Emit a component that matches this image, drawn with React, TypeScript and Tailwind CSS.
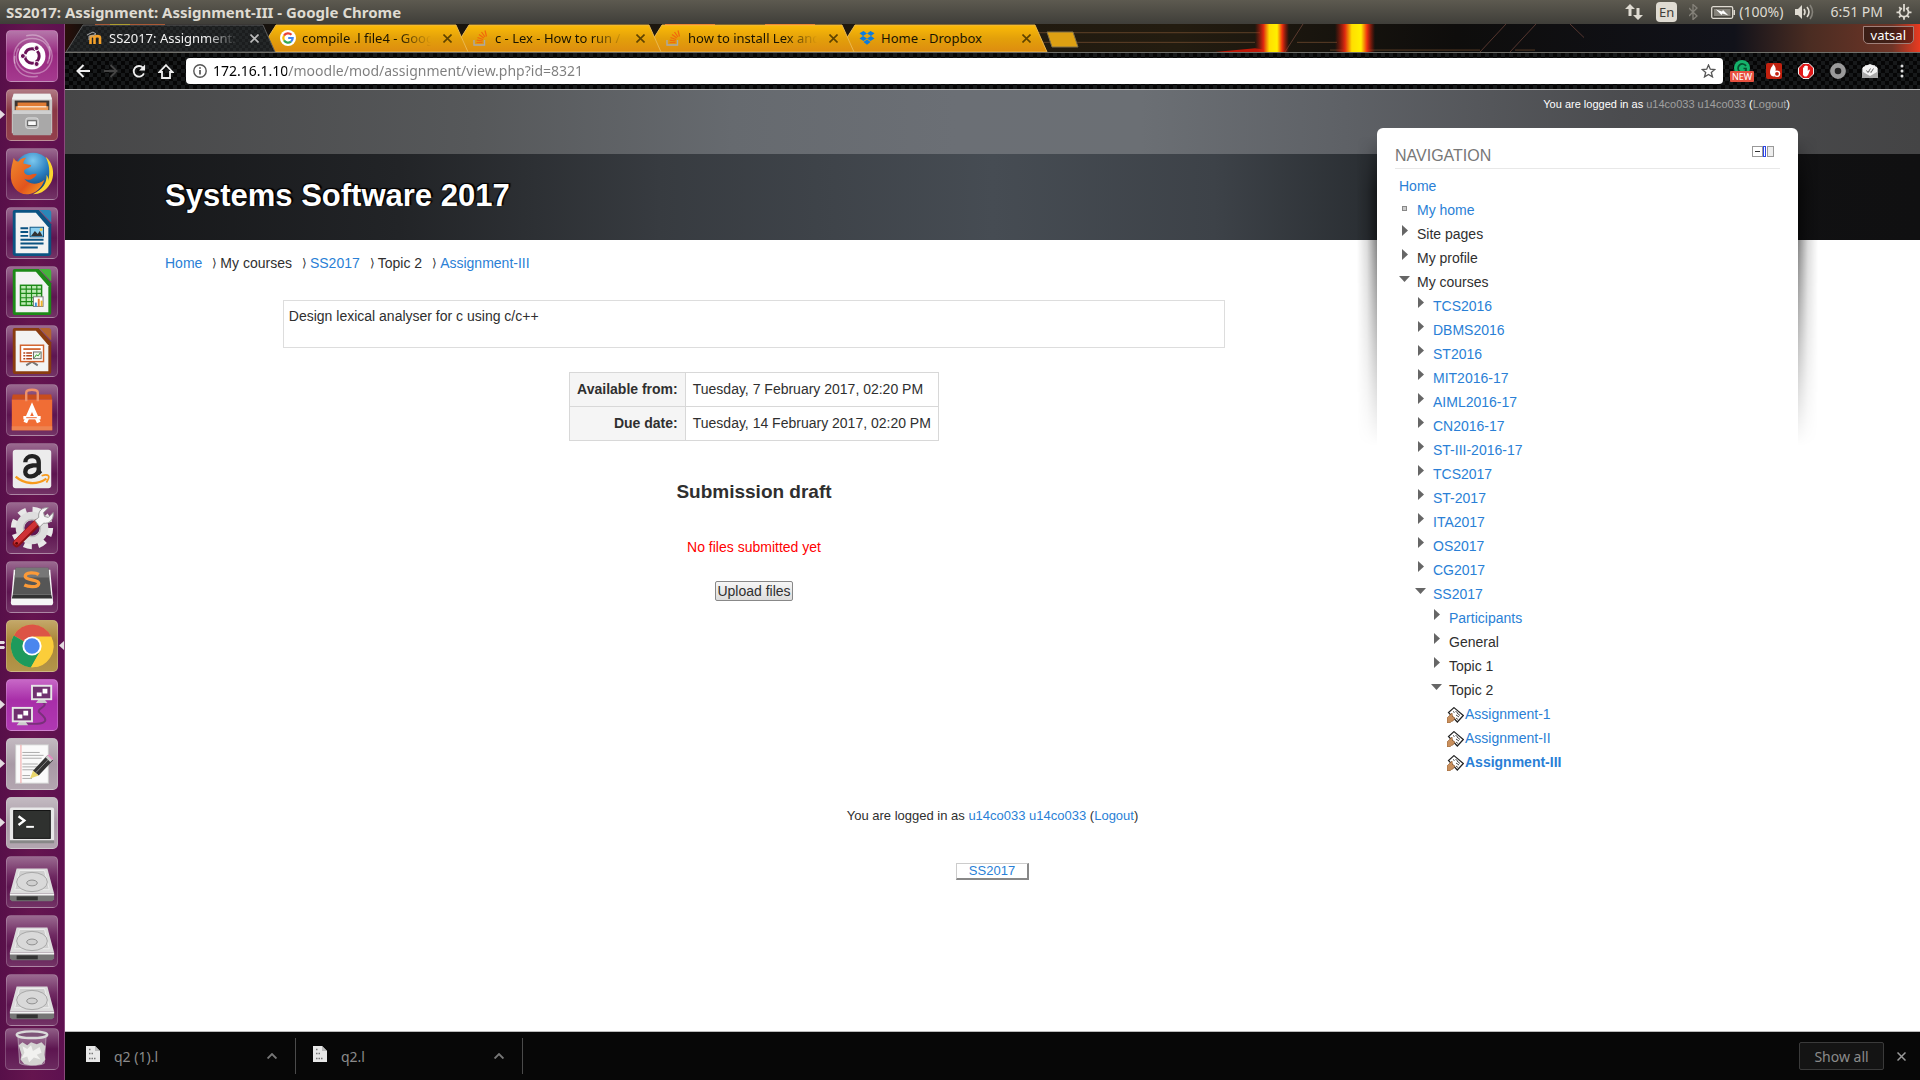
import React from "react";

type Kids = { children?: React.ReactNode };

const UI = "font-['Noto_Sans',sans-serif]";
const LINK = "text-[#2a7fd6]";

/* ---------- Launcher icons ---------- */

const Svg = ({ children }: Kids) => (
  <svg viewBox="0 0 52 52" className="block h-full w-full" aria-hidden="true">
    {children}
  </svg>
);

const DashIcon = () => (
  <Svg>
    <g fill="none" stroke="#fff" strokeOpacity=".35" strokeWidth="1.5">
      <path d="M8 34C4 16 16 6 30 8c12 2 18 14 12 26" />
      <path d="M44 16c8 14-2 30-18 28C12 42 6 30 12 18" />
      <path d="M20 5c16-4 28 8 24 24M32 47C16 50 6 40 8 26" />
    </g>
    <circle cx="26" cy="26" r="14" fill="#fff" />
    <circle cx="26" cy="26" r="7.5" fill="none" stroke="#6b1358" strokeWidth="3" strokeDasharray="13.7 2" strokeDashoffset="6" />
    <g fill="#6b1358" stroke="#fff" strokeWidth="1">
      <circle cx="16.500" cy="26" r="2.600" />
      <circle cx="30.800" cy="17.800" r="2.600" />
      <circle cx="30.800" cy="34.300" r="2.600" />
    </g>
  </Svg>
);

const FilesIcon = () => (
  <Svg>
    <path d="M7 4h38l2 7v34H5V11z" fill="#c9c7c6" />
    <path d="M7 4h38l2 6H5z" fill="#efefef" />
    <rect x="8" y="11" width="36" height="11" fill="#3c3532" />
    <rect x="11" y="13" width="30" height="9" fill="#e07b33" />
    <path d="M9 17h34v5H9z" fill="#ef9a54" />
    <path d="M11 17.500h30" stroke="#fff" strokeWidth="1" />
    <rect x="6" y="21" width="40" height="26" rx="1" fill="#a9a8a8" />
    <path d="M6 21h40v4H6z" fill="#cfcfcf" />
    <rect x="19.500" y="29" width="13" height="11" rx="2.500" fill="#bbb" stroke="#ddd" />
    <rect x="21.500" y="32" width="9" height="5" fill="#fafafa" stroke="#555" />
  </Svg>
);

const FirefoxIcon = () => (
  <Svg>
    <defs>
      <radialGradient id="ffb" cx=".5" cy=".2" r=".8">
        <stop offset="0" stopColor="#7cc8ee" />
        <stop offset=".5" stopColor="#2a7fc0" />
        <stop offset="1" stopColor="#123a70" />
      </radialGradient>
      <linearGradient id="ffo" x1="0" y1="0" x2="1" y2="1">
        <stop offset="0" stopColor="#f08a2c" />
        <stop offset=".6" stopColor="#e2541d" />
        <stop offset="1" stopColor="#f7a823" />
      </linearGradient>
    </defs>
    <circle cx="27" cy="24" r="20" fill="url(#ffb)" />
    <path d="M40 8c9 7 11 22 3 31-4 5-9 8-16 8 10-5 15-12 14-20 2 2 2 4 2 6 2-9 1-18-3-25z" fill="#fbd52f" />
    <path d="M7 9c1 3 3 4 5 4 2-3 5-4 8-4-2 2-3 4-3 6 3 1 7 1 8 2 1 2-5 3-7 5-1 3 2 5 5 5 3 0 5-2 8-1-3 6-9 7-13 5 4 6 14 7 21 1-3 9-9 14-17 15C12 48 3 39 4 26c0-7 2-12 3-17z" fill="url(#ffo)" />
  </Svg>
);

const OfficeDoc = ({ c, c2, children }: Kids & { c: string; c2: string }) => (
  <Svg>
    <path d="M8 2h25l13 15v30a3 3 0 0 1-3 3H9a3 3 0 0 1-3-3V4a2 2 0 0 1 2-2z" fill={c} />
    <path d="M9 5h21l13 15v27H9z" fill="#f3f3f3" />
    <path d="M34 2h9a3 3 0 0 1 3 3v10z" fill={c2} />
    {children}
  </Svg>
);

const WriterIcon = () => (
  <OfficeDoc c="#0b5382" c2="#2a87b8">
    <path d="M14 21h8M14 25h8M14 29h8M14 33h24M14 37h24M14 41h18" stroke="#0b5382" strokeWidth="2" />
    <rect x="24" y="20" width="14" height="10" fill="#8dd0f0" stroke="#0b5382" />
    <path d="M25 29l4-5 3 3 2-3 3 5z" fill="#333" />
    <circle cx="35.500" cy="22.500" r="1.500" fill="#f6c945" />
  </OfficeDoc>
);

const CalcIcon = () => (
  <OfficeDoc c="#1d8a17" c2="#43b53a">
    <rect x="14" y="19" width="22" height="21" fill="#bdeab4" stroke="#1d8a17" strokeWidth="1.500" />
    <path d="M14 23h22M14 27.500h22M14 32h22M14 36h22M20 19v21M25.500 19v21M31 19v21" stroke="#1d8a17" strokeWidth="1.200" />
    <rect x="27.500" y="31" width="10" height="10" fill="#fff" stroke="#777" />
    <path d="M29 37h2v4h-2z" fill="#3b8fd6" />
    <path d="M32 33h2v8h-2z" fill="#e07b33" />
    <path d="M35 35h2v6h-2z" fill="#f0b429" />
  </OfficeDoc>
);

const ImpressIcon = () => (
  <OfficeDoc c="#8a3c10" c2="#b3642f">
    <path d="M20 41l6-4 6 4" fill="none" stroke="#777" strokeWidth="2" />
    <rect x="14" y="20" width="24" height="17" fill="#fff" stroke="#d0602a" strokeWidth="1.500" />
    <path d="M17 24h18" stroke="#d0602a" strokeWidth="1.800" />
    <path d="M17 28h2M17 31h2M17 34h2M20 28h6M20 31h6M20 34h6" stroke="#b5451a" strokeWidth="1.500" />
    <rect x="27.500" y="27" width="8" height="7" fill="#eef5ea" stroke="#666" />
    <path d="M28.500 33l2-3 2 1 2-3" fill="none" stroke="#2b9a2b" />
  </OfficeDoc>
);

const SoftwareIcon = () => (
  <Svg>
    <path d="M6 10h40l1 5H5z" fill="#c94d1d" />
    <path d="M5 15h42v32H5z" fill="#f06d35" />
    <path d="M20 17V8c0-4 12-4 12 0v9" fill="none" stroke="#f0926a" strokeWidth="2.500" />
    <path d="M5 43h42v4H5z" fill="#ee8350" />
    <path d="M19 39l7-16 7 16" fill="none" stroke="#fff" strokeWidth="4" />
    <path d="M17 34h18" stroke="#fff" strokeWidth="3.500" />
    <path d="M20 34h11" stroke="#ef6a33" strokeWidth="1" />
  </Svg>
);

const AmazonIcon = () => (
  <Svg>
    <rect x="6" y="6" width="40" height="40" rx="3" fill="#ececec" />
    <path d="M19 19c0-8 14-9 14 0v8c0 3 1 3 2 4M33 22c-8 0-14 1-14 7 0 7 12 6 14-2" fill="none" stroke="#222" strokeWidth="4.500" />
    <path d="M9 34c9 8 22 9 32 2" fill="none" stroke="#f79a1c" strokeWidth="2.500" />
    <path d="M36 33c3-1 6-1 7 0s0 4-2 7" fill="none" stroke="#f79a1c" strokeWidth="1.800" />
  </Svg>
);

const SettingsIcon = () => (
  <Svg>
    <circle cx="26" cy="26" r="18.500" fill="none" stroke="#e8e8e8" strokeWidth="7" strokeDasharray="8 6.530" />
    <circle cx="26" cy="26" r="12.500" fill="none" stroke="#dedede" strokeWidth="9" />
    <circle cx="26" cy="26" r="9" fill="none" stroke="#bdbdbd" strokeWidth="1.200" />
    <path d="M31 21L10 42" stroke="#8d1014" strokeWidth="8" strokeLinecap="round" />
    <path d="M31 20L10 41" stroke="#cf3236" strokeWidth="5.500" strokeLinecap="round" />
    <path d="M29 18l4-3c-1-7 4-11 10-10l-5 5 1 4 4 1 5-5c1 7-4 12-10 11l-4 4z" fill="#f4f4f4" stroke="#999" />
    <circle cx="10" cy="42" r="1.500" fill="#5d080a" />
  </Svg>
);

const SublimeIcon = () => (
  <Svg>
    <path d="M7 8h38l3 34c0 2-1 3-3 3H7c-2 0-3-1-3-3z" fill="#f5f5f5" />
    <path d="M9 6h34l3 28H6z" fill="#565656" />
    <path d="M9 6h34l1 10H8z" fill="#777" />
    <path d="M6 34h40l1 4H5z" fill="#333" />
    <path d="M33 13c-3-2-14-3-14 2 0 4 14 3 14 7 0 5-11 4-15 2" fill="none" stroke="#fb9a38" strokeWidth="3.500" />
  </Svg>
);

const ChromeIcon = () => (
  <Svg>
    <circle cx="26" cy="26" r="22" fill="#fbcd3a" />
    <path d="M26 26L7 15A22 22 0 0 1 46 16z" fill="#dc5446" />
    <path d="M26 26L7 15A22 22 0 0 0 25 48l9-16z" fill="#1e9a5c" />
    <path d="M26 16h20a22 22 0 0 1-21 32l10-17z" fill="#fbcd3a" />
    <circle cx="26" cy="26" r="10" fill="#fff" />
    <circle cx="26" cy="26" r="8" fill="#4a86ee" />
  </Svg>
);

const RemoteIcon = () => (
  <Svg>
    <path d="M37 23c8 4-8 7-3 11s8 8 4 10-14 2-20 1" fill="none" stroke="#79307a" strokeWidth="2" />
    {[[25, 5], [5, 28]].map(([x, y]) => (
      <g key={x} transform={`translate(${x} ${y})`}>
        <path d="M8 15h6l3 4H5z" fill="#ccc" />
        <rect x="0" y="0" width="22" height="16" fill="#e6e6e6" />
        <rect x="2" y="2" width="18" height="12" fill="#70306f" />
        <path d="M12 4h5v5h-5zM6 8h5v4H6z" fill="#fff" />
      </g>
    ))}
  </Svg>
);

const EditorIcon = () => (
  <Svg>
    <rect x="9" y="6" width="34" height="40" fill="#fafafa" stroke="#ccc" />
    <path d="M14.500 6v40" stroke="#f0a0a0" />
    <path d="M16 14h18M16 17h22M16 20h20M16 26h16M16 29h20M16 32h12M16 38h8M16 41h10" stroke="#aaa" strokeWidth="1" />
    <path d="M27 33L42 17l6 5-15 16z" fill="#333" />
    <path d="M30 35L45 19" stroke="#888" />
    <path d="M27 33l6 5-9 3z" fill="#e9d66b" />
    <path d="M40 19l3-3 5 5-3 3z" fill="#ccc" />
    <path d="M42 17l2-1 4 4-1 2z" fill="#e58bc2" />
  </Svg>
);

const TerminalIcon = () => (
  <Svg>
    <rect x="3" y="10" width="46" height="36" rx="2" fill="#e8e8e8" />
    <path d="M3 44h46v3H3z" fill="#888" />
    <rect x="7" y="13" width="38" height="29" fill="#2f312f" stroke="#111" />
    <path d="M12 19l6 4.500-6 4.500" fill="none" stroke="#fff" strokeWidth="2.500" />
    <path d="M20 30h8" stroke="#fff" strokeWidth="2" />
  </Svg>
);

const DiskIcon = () => (
  <Svg>
    <path d="M10 12h32l7 26H3z" fill="#dcdcdc" />
    <path d="M13 14h26l5 20H8z" fill="#cfcfcf" stroke="#ededed" />
    <ellipse cx="26" cy="26" rx="16" ry="10" fill="#d9d9d9" stroke="#a5a5a5" />
    <ellipse cx="26" cy="27" rx="5.500" ry="3" fill="#d0d0d0" stroke="#8c8c8c" />
    <path d="M3 38h46v6l-2 2H5l-2-2z" fill="#767676" />
    <path d="M3 38h46v2H3z" fill="#f4f4f4" />
    <path d="M10 41h22v4H10z" fill="#333" />
  </Svg>
);

const TrashIcon = () => (
  <svg viewBox="0 0 52 42" className="block h-full w-full" aria-hidden="true">
    <path d="M11 5l2 31c4 3 22 3 26 0l2-31z" fill="#fff" fillOpacity=".22" stroke="#ddd" strokeOpacity=".5" />
    <ellipse cx="26" cy="6" rx="16" ry="3.500" fill="#7d5378" stroke="#dadada" strokeWidth="2.500" />
    <path d="M12 17l4-3 5 3 4-3 6 2 5-2 4 4-1 9 1 5-4 5-6 1-6 0-6-1-4-5 1-5z" fill="#d4d4d2" />
    <path d="M16 18l5 3 4-4 2 6 7-4 2 6-5 2 4 5-7-2-5 5-2-6-6 2 3-6z" fill="#f1f1ef" />
  </svg>
);

type Tile = { name: string; icon: React.ReactNode; bg: string; left?: number; focus?: boolean };
const GLASS = "bg-[linear-gradient(#9a6a90_0%,#6f2a62_38%,#5d1550_60%,#733366_100%)]";

const tiles: Tile[] = [
  { name: "Dash", icon: <DashIcon />, bg: "bg-[linear-gradient(#b577aa,#97287f_45%,#a53a8f)]" },
  { name: "Files", icon: <FilesIcon />, bg: "bg-[linear-gradient(#b07a84,#8a3845_40%,#93404c)]", left: 1 },
  { name: "Firefox", icon: <FirefoxIcon />, bg: GLASS },
  { name: "Writer", icon: <WriterIcon />, bg: GLASS },
  { name: "Calc", icon: <CalcIcon />, bg: GLASS },
  { name: "Impress", icon: <ImpressIcon />, bg: GLASS },
  { name: "Software", icon: <SoftwareIcon />, bg: GLASS },
  { name: "Amazon", icon: <AmazonIcon />, bg: GLASS },
  { name: "Settings", icon: <SettingsIcon />, bg: GLASS },
  { name: "Sublime Text", icon: <SublimeIcon />, bg: GLASS },
  { name: "Chrome", icon: <ChromeIcon />, bg: "bg-[linear-gradient(#c4a768,#a98638_40%,#b3954a)]", left: 2, focus: true },
  { name: "Remote Desktop", icon: <RemoteIcon />, bg: "bg-[linear-gradient(#c767c6,#a82ea8_40%,#b038b2)]", left: 1 },
  { name: "Text Editor", icon: <EditorIcon />, bg: "bg-[linear-gradient(#c3bac1,#a99aa6_50%,#b3a6b0)]", left: 1 },
  { name: "Terminal", icon: <TerminalIcon />, bg: "bg-[linear-gradient(#c3bac1,#a99aa6_50%,#b3a6b0)]", left: 1 },
  { name: "Disk 1", icon: <DiskIcon />, bg: GLASS },
  { name: "Disk 2", icon: <DiskIcon />, bg: GLASS },
  { name: "Disk 3", icon: <DiskIcon />, bg: GLASS },
];

function Launcher() {
  return (
    <nav aria-label="Launcher" className="flex w-[65px] shrink-0 flex-col border-r border-[#8a4a7c] bg-[linear-gradient(90deg,#570f49,#65154f_50%,#5e1150)] pt-1.5">
      <ul className="flex flex-col gap-[7px]">
        {tiles.map((t) => (
          <li key={t.name} className="relative pl-1.5">
            <button aria-label={t.name} className={`block size-[52px] rounded-[5px] border border-white/20 ${t.bg}`}>
              {t.icon}
            </button>
            {t.left === 1 && (
              <svg className="absolute top-[21px] left-0" width="5" height="9" aria-hidden="true"><path d="M0 0l5 4.500L0 9z" fill="#e3dbe0" /></svg>
            )}
            {t.left === 2 && (
              <svg className="absolute top-[21px] left-0" width="5" height="9" aria-hidden="true"><path d="M0 0h4l1 1.500L4 3H0zM0 5h4l1 1.500L4 8H0z" fill="#e3dbe0" /></svg>
            )}
            {t.focus && (
              <svg className="absolute top-[21px] right-0" width="5" height="9" aria-hidden="true"><path d="M5 0L0 4.500 5 9z" fill="#e3dbe0" /></svg>
            )}
          </li>
        ))}
      </ul>
      <div className="pt-0.5 pl-[5px]">
        <button aria-label="Trash" className="block h-[42px] w-[54px] rounded-[5px] border border-white/20 bg-[linear-gradient(#8f5c85,#5d1550_50%,#6b2a5f)]">
          <TrashIcon />
        </button>
      </div>
    </nav>
  );
}

/* ---------- Desktop top bar ---------- */

function TopBar() {
  return (
    <header className={`flex h-6 items-center justify-between bg-[linear-gradient(#5d5a50,#3f3e39)] pr-2 pl-1.5 text-[#dfdbd2] ${UI}`}>
      <h1 className="text-[15px] leading-6 font-bold whitespace-nowrap">SS2017: Assignment: Assignment-III - Google Chrome</h1>
      <div className="flex items-center text-[14px] leading-6 whitespace-nowrap">
        <svg width="18" height="16" viewBox="0 0 18 16" fill="#dfdbd2" aria-label="Network"><path d="M5 0l5 5H6.500v7h-3V5H0zM13 16l-5-5h3.500V4h3v7H18z" /></svg>
        <span className="ml-[13px] rounded-sm bg-[#dfdbd2] px-[3px] text-[13px] leading-5 text-[#3f3e39]">En</span>
        <svg className="ml-3" width="9" height="16" viewBox="0 0 9 16" fill="none" stroke="#85827a" strokeWidth="1.300" aria-label="Bluetooth"><path d="M0 4l8 8-4 3.500V.5L8 4l-8 8" /></svg>
        <svg className="ml-[13px]" width="25" height="13" viewBox="0 0 25 13" aria-label="Battery">
          <rect x=".7" y=".7" width="21" height="11.600" rx="1.500" fill="none" stroke="#dfdbd2" strokeWidth="1.300" />
          <rect x="3" y="3" width="16.500" height="7" fill="#85827a" />
          <path d="M22.500 4H24v5h-1.500z" fill="#dfdbd2" />
          <path d="M5 3.500l6 2 1-1.500 5.500 5.500-6-2-1 1.500z" fill="#fff" />
        </svg>
        <span className="ml-[3px]">(100%)</span>
        <svg className="ml-3" width="20" height="16" viewBox="0 0 20 16" aria-label="Volume">
          <path d="M0 5h3l4-4v14l-4-4H0z" fill="#dfdbd2" />
          <g fill="none" strokeWidth="1.600"><path d="M9 5q2 3 0 6M12 3q4 5 0 10" stroke="#dfdbd2" /><path d="M15 1q5 7 0 14" stroke="#85827a" /></g>
        </svg>
        <span className="ml-[15px]">6:51 PM</span>
        <svg className="ml-[13px]" width="16" height="16" viewBox="0 0 16 16" fill="none" stroke="#dfdbd2" aria-label="System">
          <path d="M6 4.200a4.500 4.500 0 1 0 4 0" strokeWidth="1.800" /><path d="M8 0v7.500" strokeWidth="1.800" />
          <path d="M3.200 3.200l1.600 1.600M12.800 3.200l-1.600 1.600M.5 8.300h3M15.500 8.300h-3M3 13.300l1.700-1.700M13 13.300l-1.700-1.700M8 15.800v-3" strokeWidth="1.800" />
        </svg>
      </div>
    </header>
  );
}

/* ---------- Browser chrome ---------- */

const MoodleIcon = () => (
  <svg width="16" height="16" viewBox="0 0 16 16" aria-hidden="true">
    <path d="M3.500 14V8c0-2.500 4-2.500 4 0v6M7.500 8c0-2.500 5.500-2.500 5.500 0v6" fill="none" stroke="#f4a12a" strokeWidth="2.600" />
    <path d="M0 5l6-3 3 2-4 2-3 0v4" fill="none" stroke="#aaa" strokeWidth="1" />
  </svg>
);
const GoogleIcon = () => (
  <svg width="16" height="16" viewBox="0 0 16 16" aria-hidden="true">
    <circle cx="8" cy="8" r="8" fill="#fff" />
    <g fill="none" strokeWidth="2.200">
      <path d="M11.500 4.800A4.700 4.700 0 0 0 4 5.600" stroke="#ea4335" />
      <path d="M4 5.600a4.700 4.700 0 0 0 0 4.800" stroke="#fbbc05" />
      <path d="M4 10.400a4.700 4.700 0 0 0 7 1.200" stroke="#34a853" />
      <path d="M11 11.600A4.700 4.700 0 0 0 12.700 8H8.200" stroke="#4285f4" />
    </g>
  </svg>
);
const StackIcon = () => (
  <svg width="16" height="16" viewBox="0 0 16 16" fill="none" aria-hidden="true">
    <path d="M1 10v5h10.500v-5" stroke="#a9a9a9" strokeWidth="1.400" />
    <path d="M3.500 12.500h6M3.700 10.200l6 .8M4.500 7.500l5.500 2M6 4.500l4.800 3.500M8.500 2l3.500 5M12 .5l1.500 6" stroke="#f2670c" strokeWidth="1.200" />
  </svg>
);
const DropboxIcon = () => (
  <svg width="16" height="16" viewBox="0 0 16 16" fill="#0a7ce0" aria-hidden="true">
    <path d="M4.500 1L8 3.500 4 6 .5 3.300zM11.500 1L8 3.500 12 6l3.500-2.700zM4 6l4 2.600L4.500 11 .5 8.500zM12 6L8 8.600l3.500 2.400 4-2.500zM4.500 12L8 9.600l3.500 2.400L8 14.800z" />
  </svg>
);

const tabs = [
  { title: "SS2017: Assignment:", icon: <MoodleIcon />, active: true, z: "z-50" },
  { title: "compile .l file4 - Goog", icon: <GoogleIcon />, z: "z-40" },
  { title: "c - Lex - How to run /", icon: <StackIcon />, z: "z-30" },
  { title: "how to install Lex and", icon: <StackIcon />, z: "z-20" },
  { title: "Home - Dropbox", icon: <DropboxIcon />, z: "z-10", whole: true },
];

function TabStrip() {
  return (
    <div className="relative flex h-7 items-end overflow-hidden bg-[#14110e]">
      <svg className="absolute inset-0 h-full w-full" viewBox="0 0 1855 29" preserveAspectRatio="none" aria-hidden="true">
        <defs>
          <linearGradient id="strip" x1="0" x2="1">
            <stop offset="0" stopColor="#2a0f0a" /><stop offset=".01" stopColor="#14100d" />
            <stop offset=".6" stopColor="#231c10" /><stop offset=".75" stopColor="#0e0d0c" />
            <stop offset=".9" stopColor="#11121a" /><stop offset=".94" stopColor="#4a2c22" />
            <stop offset=".985" stopColor="#6e3527" /><stop offset="1" stopColor="#ea3a20" />
          </linearGradient>
          <linearGradient id="flame" x1="0" x2="1">
            <stop offset="0" stopColor="#c01808" stopOpacity="0" /><stop offset=".25" stopColor="#e02a10" />
            <stop offset=".42" stopColor="#ffdf00" /><stop offset=".65" stopColor="#fff000" />
            <stop offset=".8" stopColor="#f03010" /><stop offset="1" stopColor="#c01808" stopOpacity="0" />
          </linearGradient>
        </defs>
        <rect width="1855" height="29" fill="url(#strip)" />
        <path d="M970 9h225M970 19h220M1232 19h40M1265 27h150M1450 27h20" stroke="#8a5a38" strokeOpacity=".6" fill="none" />
        <path d="M1150 29l40-4 24 4z" fill="#c01808" />
        <path d="M1220 29l18-29M1415 29l26-29M1445 29l26-29M1505 0l14 14" stroke="#a06050" strokeOpacity=".5" fill="none" />
        <rect x="1190" width="34" height="29" fill="url(#flame)" />
        <rect x="1270" width="40" height="29" fill="url(#flame)" />
        <rect x="30" width="70" height="1" fill="#ff5a10" /><rect x="45" width="20" height="1" fill="#ffe000" />
        <rect x="600" width="50" height="1" fill="#ff5a10" /><rect x="700" width="50" height="1" fill="#ff5a10" />
      </svg>
      <div role="tablist" aria-label="Tabs" className={`relative flex text-[13px] leading-7 ${UI}`}>
        {tabs.map((t) => (
          <div key={t.title} className={`relative -mr-[18px] h-7 w-[211px] ${t.z}`}>
            <svg className="absolute inset-0" width="211" height="28" viewBox="0 0 211 28" aria-hidden="true">
              <defs>
                <linearGradient id="gold" x2="0" y2="1"><stop offset="0" stopColor="#fbbb08" /><stop offset=".5" stopColor="#e3a00a" /><stop offset="1" stopColor="#dd8c10" /></linearGradient>
                <pattern id="carbon" width="6" height="6" patternUnits="userSpaceOnUse"><rect width="6" height="6" fill="#1b1d1e" /><path d="M0 0h3v3H0zM3 3h3v3H3z" fill="#242728" /></pattern>
              </defs>
              <path d="M1 28L18 1h180l12 27z" fill={t.active ? "url(#carbon)" : "url(#gold)"} stroke={t.active ? "#5c5c5c" : "#e9b850"} />
            </svg>
            <div className="relative flex h-7 items-center pr-[17px] pl-[22px]">
              {t.icon}
              <button
                role="tab"
                aria-selected={!!t.active}
                className={`ml-1.5 min-w-0 flex-1 overflow-hidden text-left whitespace-nowrap ${t.whole ? "" : "[mask-image:linear-gradient(90deg,#000_75%,transparent)]"} ${t.active ? "text-[#f2f2f2]" : "text-[#1a1400]"}`}
              >
                {t.title}
              </button>
              <button aria-label={`Close ${t.title}`} className={`ml-3 ${t.active ? "text-[#bbb]" : "text-[#5e4300]"}`}>
                <svg width="9" height="9" viewBox="0 0 9 9" stroke="currentColor" strokeWidth="1.600"><path d="M.5.5l8 8M8.500.5l-8 8" /></svg>
              </button>
            </div>
          </div>
        ))}
      </div>
      <button aria-label="New tab" className="relative mb-1 ml-4">
        <svg className="block" width="33" height="17" viewBox="0 0 33 17"><path d="M1 1h26l5 15H6z" fill="#dda013" stroke="#80704a" /></svg>
      </button>
      <button className={`absolute top-0.5 right-1.5 rounded-b-[5px] border border-[#a0807a] bg-black/40 px-[7px] text-[13px] leading-4 text-white ${UI}`}>vatsal</button>
    </div>
  );
}

function Toolbar() {
  return (
    <div className="flex h-[38px] items-center border-t border-b border-t-[#6f6f6a] border-b-[#b0b0b0] bg-[#060606] bg-[repeating-conic-gradient(#17191a_0_25%,#060606_0_50%)] bg-size-[8px_8px] pr-4 pl-[11px]">
      <button aria-label="Back"><svg width="14" height="14" viewBox="0 0 14 14" fill="none" stroke="#eee" strokeWidth="2"><path d="M14 7H1.500M7.500 1L1.500 7l6 6" /></svg></button>
      <button aria-label="Forward" className="ml-3.5"><svg width="14" height="14" viewBox="0 0 14 14" fill="none" stroke="#444" strokeWidth="2"><path d="M0 7h12.500M6.500 1l6 6-6 6" /></svg></button>
      <button aria-label="Reload" className="ml-3.5"><svg width="14" height="15" viewBox="0 0 15 15" fill="none" stroke="#eee" strokeWidth="2"><path d="M12.800 9.500a5.700 5.700 0 1 1-1-6" /><path d="M14 0v6.500H7.500z" fill="#eee" stroke="none" /></svg></button>
      <button aria-label="Home" className="ml-3"><svg width="16" height="15" viewBox="0 0 16 15" fill="none" stroke="#eee" strokeWidth="1.800"><path d="M8 1.200L1.500 8H4v6h8V8h2.500z" /></svg></button>
      <form className="ml-3 flex h-[26px] min-w-0 flex-1 items-center rounded-sm bg-white px-[7px]">
        <svg width="14" height="14" viewBox="0 0 14 14" fill="none" stroke="#555" strokeWidth="1.400" aria-hidden="true"><circle cx="7" cy="7" r="6.200" /><path d="M7 6v4.500M7 3.200v1.600" strokeWidth="1.700" /></svg>
        <input
          aria-label="Address"
          defaultValue="172.16.1.10/moodle/mod/assignment/view.php?id=8321"
          className={`ml-1.5 min-w-0 flex-1 bg-[linear-gradient(90deg,#000_74px,#7d7d7d_74px)] bg-clip-text text-[14px] leading-5 text-transparent outline-none ${UI}`}
        />
        <button type="button" aria-label="Bookmark"><svg width="15" height="14" viewBox="0 0 15 14" fill="none" stroke="#555" strokeWidth="1.300"><path d="M7.500 1l1.800 4.200 4.500.3-3.500 2.900 1.200 4.500-4-2.500-4 2.500 1.200-4.500L1.200 5.500l4.500-.3z" /></svg></button>
      </form>
      <div className="ml-[7px] flex items-center">
        <button aria-label="Grammar" className="relative h-[22px] w-6">
          <svg className="absolute top-0 left-1" width="16" height="16" viewBox="0 0 16 16"><circle cx="8" cy="8" r="8" fill="#15b36b" /><path d="M12 6a4.300 4.300 0 1 0 0 4.500V8.500H9.500" fill="none" stroke="#06502f" strokeWidth="1.700" /></svg>
          <span className={`absolute bottom-0 left-0 w-6 rounded-[1px] bg-[#e8503f] text-center text-[9px] leading-[11px] text-white ${UI}`}>NEW</span>
        </button>
        <button aria-label="Download manager" className="ml-3"><svg width="16" height="16" viewBox="0 0 16 16"><rect width="16" height="16" rx="2" fill="#c2210f" /><path d="M7 1c3 3 3 5 2.500 7C8 9 7.500 11 8.500 13.500 4 14 3 9 5 5c.6-1.300 2-2 2-4z" fill="#fff" /><circle cx="11" cy="10.800" r="2.600" fill="#c2210f" stroke="#fff" strokeWidth="1.400" /></svg></button>
        <button aria-label="Ad blocker" className="ml-4"><svg width="16" height="16" viewBox="0 0 16 16"><path d="M5 .5h6L15.500 5v6L11 15.500H5L.5 11V5z" fill="#e01818" stroke="#eee" /><path d="M5 8V4.500h1.200V3h1.200v-.5h1.200V3h1.200v5l1.200-1.500 1 .5-2 5-1.500 1.500H6.500L5 12z" fill="#fff" /></svg></button>
        <button aria-label="Extension" className="ml-4"><svg width="16" height="16" viewBox="0 0 16 16"><circle cx="8" cy="8" r="5.600" fill="#222" stroke="#9a9a9a" strokeWidth="4.600" /></svg></button>
        <button aria-label="Mail" className="ml-4"><svg width="16" height="14" viewBox="0 0 16 14"><path d="M0 4l3-1.500V1h10v1.500L16 4v10H0z" fill="#aaa" /><path d="M1 3l7-3 7 3v5l-7 4-7-4z" fill="#f3f3f3" /><path d="M4.500 6.500l1.500 2L8.500 4.500M8 7.500l1 1 2.500-4" fill="none" stroke="#666" /></svg></button>
        <button aria-label="Menu" className="ml-[22px]"><svg width="4" height="14" viewBox="0 0 4 14" fill="#ddd"><circle cx="2" cy="2" r="1.500" /><circle cx="2" cy="7" r="1.500" /><circle cx="2" cy="12" r="1.500" /></svg></button>
      </div>
    </div>
  );
}

/* ---------- Moodle page ---------- */

type Node = { label: string; link?: boolean; icon?: "dot" | "doc"; bold?: boolean; children?: Node[] };

const courses = ["TCS2016", "DBMS2016", "ST2016", "MIT2016-17", "AIML2016-17", "CN2016-17", "ST-III-2016-17", "TCS2017", "ST-2017", "ITA2017", "OS2017", "CG2017"];

const tree: Node[] = [
  { label: "My home", link: true, icon: "dot" },
  { label: "Site pages" },
  { label: "My profile" },
  {
    label: "My courses",
    children: [
      ...courses.map((label) => ({ label, link: true })),
      {
        label: "SS2017",
        link: true,
        children: [
          { label: "Participants", link: true },
          { label: "General" },
          { label: "Topic 1" },
          {
            label: "Topic 2",
            children: [
              { label: "Assignment-1", link: true, icon: "doc" },
              { label: "Assignment-II", link: true, icon: "doc" },
              { label: "Assignment-III", link: true, icon: "doc", bold: true },
            ],
          },
        ],
      },
    ],
  },
];

function Marker({ node }: { node: Node }) {
  if (node.icon === "dot") return <svg className="mb-[3px] ml-[3px]" width="5" height="5" aria-hidden="true"><rect x=".5" y=".5" width="4" height="4" fill="#ccc" stroke="#888" /></svg>;
  if (node.icon === "doc")
    return (
      <svg className="mt-0.5" width="17" height="16" viewBox="0 0 17 16" aria-hidden="true">
        <path d="M7 .6l9.300 7.900-6 6.500L1.500 5.500z" fill="#fff" stroke="#222" strokeWidth="1.200" />
        <path d="M6 4.500l1.500 1M8.500 4l2 2M9 8l3 2M10 6l3 2.500M9 11l2 1.500" stroke="#444" strokeWidth="1" />
        <path d="M0 16v-5l5-5 .5 3.500 2.500 1.500-2 3-2 .5-1 1.500z" fill="#c98f5c" stroke="#8d5b30" strokeWidth=".6" />
      </svg>
    );
  return (
    <button aria-label={`Toggle ${node.label}`} className="block pb-1.5">
      {node.children ? (
        <svg className="mb-px" width="11" height="6" aria-hidden="true"><path d="M0 0h11L5.500 6z" fill="#666" /></svg>
      ) : (
        <svg className="mb-px ml-[3px]" width="6" height="11" aria-hidden="true"><path d="M0 0l6 5.500L0 11z" fill="#666" /></svg>
      )}
    </button>
  );
}

function Tree({ nodes }: { nodes: Node[] }) {
  return (
    <ul>
      {nodes.map((n) => (
        <li key={n.label}>
          <div className="flex h-6 items-center">
            <span className="flex w-[18px] shrink-0 items-center">
              <Marker node={n} />
            </span>
            {n.link ? <a href="#" className={`${LINK} ${n.bold ? "font-bold" : ""}`}>{n.label}</a> : <span>{n.label}</span>}
          </div>
          {n.children && <div className="pl-4"><Tree nodes={n.children} /></div>}
        </li>
      ))}
    </ul>
  );
}

function Navigation() {
  return (
    <aside className="relative -mt-28 w-[421px] shrink-0">
      <div className="absolute top-2 -left-5 h-[310px] w-5 bg-[linear-gradient(270deg,rgba(0,0,0,.5),rgba(0,0,0,.15)_50%,transparent)] [mask-image:linear-gradient(transparent,#000_18%,#000_30%,transparent)]" />
      <div className="absolute top-2 -right-5 h-[310px] w-5 bg-[linear-gradient(90deg,rgba(0,0,0,.5),rgba(0,0,0,.15)_50%,transparent)] [mask-image:linear-gradient(transparent,#000_18%,#000_30%,transparent)]" />
      <div className="relative rounded-md bg-white px-[18px] pt-[18px] pb-4">
        <div className="flex items-start justify-between border-b border-[#e8e8e8] pb-0.5">
          <h2 className="text-[16px] leading-5 text-[#777]">NAVIGATION</h2>
          <button aria-label="Hide and dock block" className="mr-1.5">
            <svg className="block" width="22" height="11" viewBox="0 0 22 11" fill="#fff">
              <rect x=".5" y=".5" width="10" height="10" stroke="#999" /><path d="M3 5.500h5" stroke="#333" />
              <rect x="11.500" y=".5" width="2" height="10" stroke="#2c46e8" /><rect x="15.500" y=".5" width="6" height="10" fill="#eee" stroke="#999" />
            </svg>
          </button>
        </div>
        <div className="pt-[5px] pl-1">
          <a href="#" className={`flex h-6 items-center ${LINK}`}>Home</a>
          <Tree nodes={tree} />
        </div>
      </div>
    </aside>
  );
}

const crumbs = [
  { label: "Home", link: true },
  { label: "My courses" },
  { label: "SS2017", link: true },
  { label: "Topic 2" },
  { label: "Assignment-III", link: true },
];

function Page() {
  return (
    <div className="min-h-0 flex-1 bg-white font-['Liberation_Sans',sans-serif] text-[14px] leading-[22px] text-[#2f2f2f]">
      <header>
        <div className="h-16 bg-[linear-gradient(90deg,#464647,#56585a_22%,#666a6f_36%,#6b6f75_48%,#6b6f74_58%,#5e6166_69%,#4b4c4f_84%,#444445)] pt-2 pr-[130px]">
          <p className="text-right text-[11px] leading-3 text-white">
            You are logged in as <a href="#" className="text-[#a0a0a0]">u14co033 u14co033</a> (<a href="#" className="text-[#a0a0a0]">Logout</a>)
          </p>
        </div>
        <div className="h-[86px] bg-[linear-gradient(90deg,#141517,#222427_18%,#373b40_32%,#464c53_50%,#3d4248_62%,#24282c_73%,#111113_84%,#101011)] pl-[100px]">
          <h1 className="pt-5 text-[31px] leading-[44px] font-bold text-white [text-shadow:-1px_-1px_1px_#000,2px_-1px_1px_#000]">Systems Software 2017</h1>
        </div>
      </header>
      <div className="flex items-start gap-[34px] pr-[122px] pl-[100px]">
        <main className="min-w-0 flex-1 pt-3">
          <nav aria-label="Breadcrumb">
            <ol className="flex">
              {crumbs.map((c, i) => (
                <li key={c.label} className="flex">
                  {i > 0 && <span className="w-[18px] pl-2.5 text-[12px]" aria-hidden="true">⟩</span>}
                  {c.link ? <a href="#" className={LINK}>{c.label}</a> : <span>{c.label}</span>}
                </li>
              ))}
            </ol>
          </nav>
          <div className="mx-auto mt-[26px] h-12 w-4/5 border border-[#ddd] px-[5px] py-1">Design lexical analyser for c using c/c++</div>
          <table className="mx-auto mt-6 border-collapse">
            <tbody>
              {[
                ["Available from:", "Tuesday, 7 February 2017, 02:20 PM"],
                ["Due date:", "Tuesday, 14 February 2017, 02:20 PM"],
              ].map(([k, v]) => (
                <tr key={k} className="h-[34px]">
                  <th scope="row" className="border border-[#d8d8d8] bg-[#f5f5f5] px-[7px] pb-0.5 text-right font-bold">{k}</th>
                  <td className="border border-[#d8d8d8] px-[7px] pb-0.5">{v}</td>
                </tr>
              ))}
            </tbody>
          </table>
          <h2 className="mt-[39px] text-center text-[19px] leading-6 font-bold">Submission draft</h2>
          <p className="mt-8 text-center text-[#f00]">No files submitted yet</p>
          <div className="mt-[23px] flex justify-center">
            <button className="rounded-xs border border-[#888] bg-[linear-gradient(#f6f6f6,#ddd)] px-px leading-[18px]">Upload files</button>
          </div>
        </main>
        <Navigation />
      </div>
      <footer className="flex flex-col items-center pt-[15px] text-[13px] leading-[22px]">
        <p>
          You are logged in as <a href="#" className={LINK}>u14co033 u14co033</a> (<a href="#" className={LINK}>Logout</a>)
        </p>
        <a href="#" className={`mt-9 border border-r-2 border-b-2 border-t-[#ccc] border-r-[#888] border-b-[#888] border-l-[#ccc] px-3 leading-[14px] ${LINK}`}>SS2017</a>
      </footer>
    </div>
  );
}

/* ---------- Download shelf ---------- */

function Shelf() {
  return (
    <div className={`flex h-[49px] shrink-0 items-center border-t border-[#bbb] bg-[#070707] text-[#8b8b8b] ${UI}`}>
      {["q2 (1).l", "q2.l"].map((f, i) => (
        <div key={f} className={`flex h-9 items-center border-r border-[#4a4a4a] pr-[18px] ${i === 0 ? "w-[231px] pl-[21px]" : "w-[227px] pl-[17px]"}`}>
          <svg className="mb-1" width="14" height="16" viewBox="0 0 14 16" aria-hidden="true">
            <path d="M0 0h9l5 5v11H0z" fill="#e8e8e8" /><path d="M9 0v5h5z" fill="#bbb" />
            <path d="M3 3.500h1.500M3 7.500h4M3 12.500h7" stroke="#777" strokeWidth="1.500" strokeDasharray="1.500 1" />
          </svg>
          <button className="ml-3.5 flex-1 text-left text-[14px]">{f}</button>
          <button aria-label={`Options for ${f}`}><svg width="10" height="6" viewBox="0 0 10 6" fill="none" stroke="#777" strokeWidth="1.800"><path d="M.6 5.500L5 1l4.400 4.500" /></svg></button>
        </div>
      ))}
      <button className="ml-auto h-7 w-[85px] rounded-xs border border-[#3a3a3a] bg-[#141414] text-[14px]">Show all</button>
      <button aria-label="Close downloads" className="mr-3.5 ml-[13px]"><svg width="9" height="9" viewBox="0 0 9 9" stroke="#999" strokeWidth="1.500"><path d="M.5.5l8 8M8.500.5l-8 8" /></svg></button>
    </div>
  );
}

export default function App() {
  return (
    <div className="flex min-h-screen flex-col">
      <TopBar />
      <div className="flex flex-1">
        <Launcher />
        <div className="flex min-w-0 flex-1 flex-col">
          <TabStrip />
          <Toolbar />
          <Page />
          <Shelf />
        </div>
      </div>
    </div>
  );
}
